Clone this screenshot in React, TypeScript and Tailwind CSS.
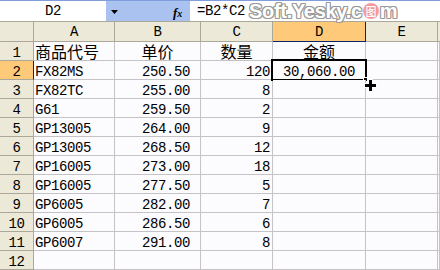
import React from "react";

type Row = { n: number; a: string; b: string; c: string; d?: string };

const rows: Row[] = [
    { n: 2, a: "FX82MS", b: "250.50", c: "120", d: "30,060.00" },
    { n: 3, a: "FX82TC", b: "255.00", c: "8" },
    { n: 4, a: "G61", b: "259.50", c: "2" },
    { n: 5, a: "GP13005", b: "264.00", c: "9" },
    { n: 6, a: "GP13005", b: "268.50", c: "12" },
    { n: 7, a: "GP16005", b: "273.00", c: "18" },
    { n: 8, a: "GP16005", b: "277.50", c: "5" },
    { n: 9, a: "GP6005", b: "282.00", c: "7" },
    { n: 10, a: "GP6005", b: "286.50", c: "6" },
    { n: 11, a: "GP6007", b: "291.00", c: "8" },
    { n: 12, a: "", b: "", c: "" },
];

const mono = "font-['Liberation_Mono',monospace] text-[14px] tracking-[-0.4px]";
const cjk = "font-['Noto_Sans_CJK_SC',sans-serif] text-[16px] tracking-normal";
const cell = "h-[19px] shrink-0 border-r border-b border-[#c6c3c6] bg-[#fcfbfe] pt-[5px] leading-[13px] whitespace-nowrap";
const rowHead = "h-[19px] w-[34px] shrink-0 border-r border-b border-[#aca899] bg-[#ece9d8] pt-[5px] leading-[13px] text-center";
const headCell = "h-[19px] shrink-0 border-r border-b border-[#c6c3c6] bg-[#fcfbfe] leading-[18px] whitespace-nowrap";

function PlusCursor() {
    return (
        <svg width="13" height="13" viewBox="0 0 13 13" className="absolute left-[364px] top-[79px]">
            <path d="M4.5 0.5h4v4h4v4h-4v4h-4v-4h-4v-4h4z" fill="#fff" stroke="#fff" />
            <path d="M5 1h3v4h4v3h-4v4h-3v-4h-4v-3h4z" fill="#000" />
        </svg>
    );
}

export default function App() {
    return (
        <div className={`relative w-[440px] h-[270px] overflow-hidden bg-[#fcfbfe] text-black ${mono}`}>
            {/* Formula bar */}
            <div className="flex h-[22px] border-t border-[#7f9ddb] border-b border-b-[#aca899] bg-white">
                <div className="w-[106px] shrink-0 pt-[4px] leading-[13px] text-center">D2</div>
                <div className="relative w-[84px] shrink-0 bg-[#a9c2ef]">
                    <svg width="8" height="5" viewBox="0 0 8 5" className="absolute left-[5px] top-[9px]">
                        <path d="M0 0h7l-3.5 4z" fill="#000" />
                    </svg>
                    <span className="absolute left-[67px] top-[2px] font-['Liberation_Serif',serif] text-[13px] font-bold italic tracking-normal">
                        f<span className="text-[10px]">x</span>
                    </span>
                </div>
                <div className="flex-1 pl-[7px] pt-[4px] leading-[13px]">=B2*C2</div>
            </div>

            {/* Watermark */}
            <div className="absolute left-[249px] top-[2px] flex h-[18px] items-center font-['Liberation_Sans',sans-serif] text-[20px] leading-[18px] font-bold tracking-[-0.3px] text-white [text-shadow:1px_0_0_#9a9a9a,-1px_0_0_#9a9a9a,0_1px_0_#9a9a9a,0_-1px_0_#9a9a9a,1px_1px_0_#9a9a9a,-1px_-1px_0_#9a9a9a,1px_-1px_0_#9a9a9a,-1px_1px_0_#9a9a9a]">
                <span>Soft.Yesky.c</span>
                <span className="mx-[1px] flex h-[16px] w-[16px] items-center justify-center rounded-full bg-[#f4a0a0] font-['Noto_Sans_CJK_SC',sans-serif] text-[11px] leading-[16px] font-bold text-white [text-shadow:0_0_1px_#d33]">
                    图
                </span>
                <span>m</span>
            </div>

            {/* Column headers */}
            <div className="flex h-[20px]">
                <div className="w-[34px] shrink-0 border-r border-b border-[#aca899] bg-[#ece9d8]" />
                {[
                    ["A", "w-[81px]"],
                    ["B", "w-[86px]"],
                    ["C", "w-[72px]"],
                    ["D", "w-[93px]"],
                    ["E", "w-[72px]"],
                ].map(([l, w]) => (
                    <div
                        key={l}
                        className={`${w} shrink-0 border-r border-b pt-[4px] leading-[13px] text-center ${
                            l === "D"
                                ? "border-r-[#0a246a] border-b-[#0a246a] bg-[#ffc97a]"
                                : "border-[#aca899] bg-[#ece9d8]"
                        }`}
                    >
                        {l}
                    </div>
                ))}
                <div className="flex-1 border-b border-[#aca899] bg-[#ece9d8]" />
            </div>

            {/* Row 1 */}
            <div className="flex">
                <div className={rowHead}>1</div>
                <div className={`${headCell} w-[81px] pl-[1px] ${cjk}`}>商品代号</div>
                <div className={`${headCell} w-[86px] text-center ${cjk}`}>单价</div>
                <div className={`${headCell} w-[72px] text-center ${cjk}`}>数量</div>
                <div className={`${headCell} w-[93px] text-center ${cjk}`}>金额</div>
                <div className={`${headCell} w-[72px]`} />
                <div className={`${headCell} flex-1`} />
            </div>

            {/* Data rows */}
            {rows.map((r) => (
                <div key={r.n} className="flex">
                    <div
                        className={`${rowHead} ${
                            r.n === 2 ? "!border-r-[#0a246a] !bg-[#ffc97a]" : ""
                        }`}
                    >
                        {r.n}
                    </div>
                    <div className={`${cell} w-[81px] pl-[1px]`}>{r.a}</div>
                    <div className={`${cell} w-[86px] pr-[10px] text-right`}>{r.b}</div>
                    <div className={`${cell} w-[72px] pr-[2px] text-right`}>{r.c}</div>
                    <div className={`${cell} relative w-[93px] text-center`}>
                        {r.d}
                        {r.d && (
                            <>
                                <div className="absolute -left-[2px] -top-[2px] h-[22px] w-[96px] border-[2px] border-black" />
                                <div className="absolute -right-[3px] -bottom-[3px] h-[5px] w-[5px] border border-white bg-black" />
                            </>
                        )}
                    </div>
                    <div className={`${cell} w-[72px]`} />
                    <div className={`${cell} flex-1`} />
                </div>
            ))}

            <PlusCursor />
        </div>
    );
}
